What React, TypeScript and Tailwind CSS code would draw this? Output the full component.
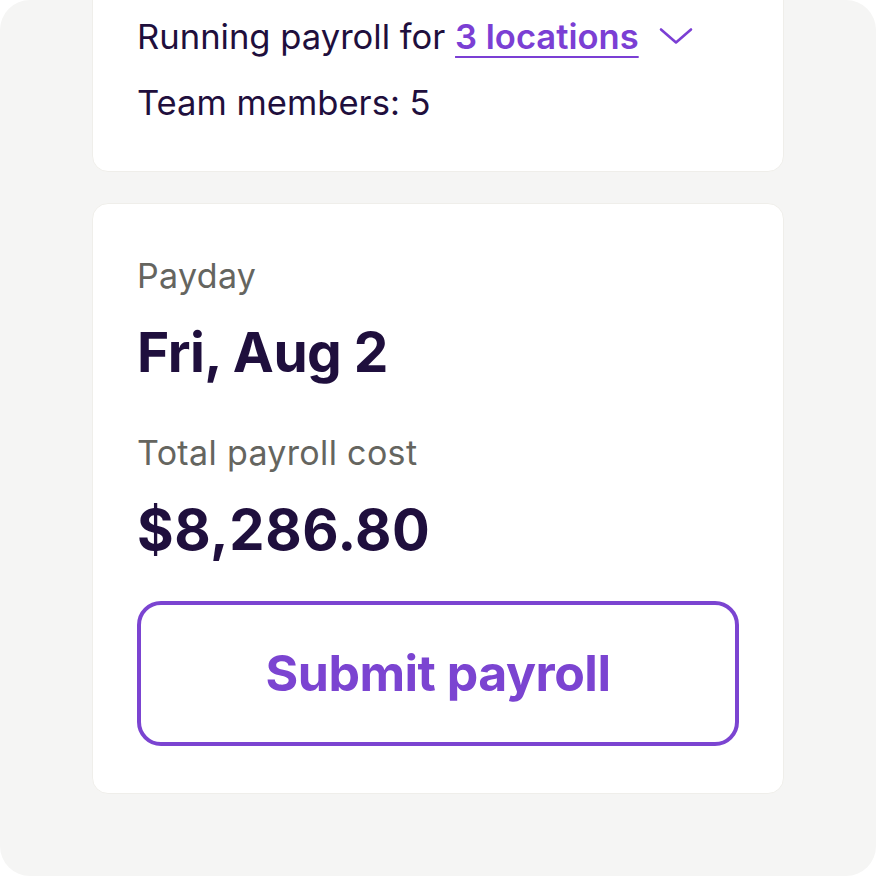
import React from "react";

export default function App() {
  return (
    <div className="w-[876px] h-[876px] bg-[#f5f5f4] rounded-[30px] overflow-hidden" style={{ fontFamily: "Inter, 'Noto Sans', sans-serif" }}>
      <div className="mx-[92px] flex flex-col gap-[31px]">
        <div className="-mt-[31px] pt-[44px] pb-[47px] px-[44px] bg-white rounded-[16px] border border-[#efeeea] flex flex-col gap-[22px]">
          <div className="flex items-center text-[34.6px] leading-[44px] text-[#1f0f3d]">
            <span>Running payroll for&nbsp;</span>
            <span className="font-semibold text-[#7b3fd4] underline decoration-[2px] underline-offset-[7px]">3 locations</span>
            <svg className="ml-[20px]" width="34" height="18" viewBox="0 0 34 18" fill="none">
              <path d="M2 2.5 L17 15.5 L32 2.5" stroke="#7b3fd4" strokeWidth="2.6" strokeLinecap="round" strokeLinejoin="round" />
            </svg>
          </div>
          <div className="text-[34.6px] leading-[44px] text-[#1f0f3d]">Team members: 5</div>
        </div>
        <div className="pt-[52px] pb-[47px] px-[44px] bg-white rounded-[16px] border border-[#efeeea] flex flex-col">
          <div className="text-[34px] leading-[40px] text-[#65655f] tracking-[0.01em]">Payday</div>
          <div className="mt-[26px] text-[55px] leading-[60px] font-bold text-[#1f0f3d] tracking-[-0.01em]">Fri, Aug 2</div>
          <div className="mt-[51px] text-[34px] leading-[40px] text-[#65655f] tracking-[0.01em]">Total payroll cost</div>
          <div className="mt-[25px] text-[56px] leading-[64px] font-bold text-[#1f0f3d] tracking-[0.01em]">$8,286.80</div>
          <button className="mt-[39px] h-[145px] w-full rounded-[24px] border-[4px] border-[#7b44d1] bg-white flex items-center justify-center text-[50px] font-bold text-[#7b44d1] tracking-[-0.01em]">
            Submit payroll
          </button>
        </div>
      </div>
    </div>
  );
}
